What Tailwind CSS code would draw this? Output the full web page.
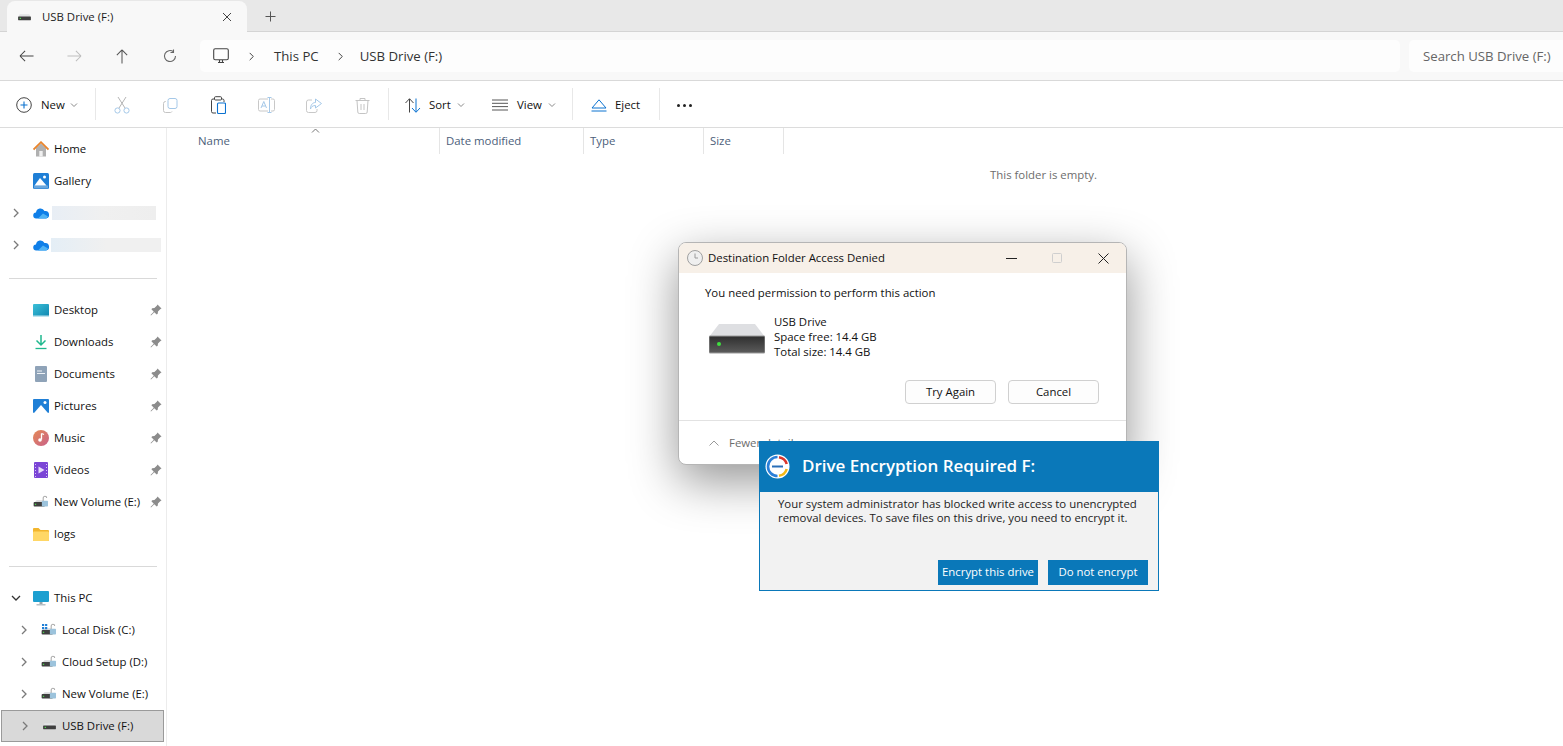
<!DOCTYPE html>
<html lang="en">
<head>
<meta charset="UTF-8">
<title>USB Drive (F:)</title>
<script src="https://cdn.jsdelivr.net/npm/@tailwindcss/browser@4"></script>
</head>
<body class="bg-white font-['Open_Sans','Noto_Sans',sans-serif] text-[11.4px] leading-[16px] text-[#111] overflow-hidden">
<svg class="hidden">
  <symbol id="chev" viewBox="0 0 10 10"><path d="M3 1l4 4-4 4" fill="none" stroke="#7a7a7a" stroke-width="1.300"/></symbol>
  <symbol id="caret" viewBox="0 0 8 8"><path d="M1 2.500l3 3 3-3" fill="none" stroke="#8a8a8a" stroke-width="1"/></symbol>
  <symbol id="pin" viewBox="0 0 12 12"><path d="M7.500 .5l4 4-1.300 .7-2.200 2.400-.3 2.200-1 .8L4.300 8.200 1 11.500 .5 11l3.300-3.300L1.400 5.300l.8-1 2.200-.3L6.800 1.800z" fill="#8c8c8c"/></symbol>
  <symbol id="drive" viewBox="0 0 18 10"><path d="M3 1.500h12l2 3.500H1z" fill="#e2e3e5"/><rect x="1" y="4.500" width="16" height="4.500" rx=".5" fill="#3f3f3f"/><rect x="3" y="6" width="1.600" height="1.500" fill="#4fe04f"/></symbol>
  <symbol id="lockdrive" viewBox="0 0 18 16"><rect x="0.500" y="8" width="13" height="5" rx="1" fill="#3f3f3f"/><path d="M2 8l2-2h8l1.500 2z" fill="#d8d9db"/><rect x="2" y="10" width="1.500" height="1.300" fill="#4fe04f"/><rect x="10" y="6.500" width="7" height="6.500" rx=".8" fill="#9cc3dc"/><path d="M11.500 6.500V3.500a2 2 0 0 1 4 0" fill="none" stroke="#a9a9a9" stroke-width="1.200"/></symbol>
</svg>

<!-- tab strip -->
<div class="h-[32px] bg-[#e8e8e8] border-b border-[#d4d4d4] flex items-end pl-[7px] relative">
  <div class="w-[240px] h-[31px] bg-[#f8f8f8] rounded-t-[8px] flex items-center pl-[10px] pr-[15px] mb-[-1px]">
    <svg class="w-[15px] h-[8px] mr-[10px]" viewBox="0 0 18 10"><use href="#drive"/></svg>
    <span class="flex-1 text-[#1c1c1c]">USB Drive (F:)</span>
    <svg class="w-[10px] h-[10px]" viewBox="0 0 10 10"><path d="M1 1l8 8M9 1l-8 8" stroke="#444" stroke-width="1"/></svg>
  </div>
  <svg class="w-[11px] h-[11px] ml-[18px] mb-[9px]" viewBox="0 0 11 11"><path d="M5.500 .5v10M.5 5.500h10" stroke="#555" stroke-width="1"/></svg>
</div>

<!-- address bar -->
<div class="h-[49px] bg-[#f8f8f8] border-b border-[#d9d9d9] flex items-center pl-[19px]">
  <svg class="w-[15px] h-[14px]" viewBox="0 0 16 14"><path d="M15.500 7H1.500M1 7l5.500-5.500M1 7l5.500 5.500" fill="none" stroke="#444" stroke-width="1.100"/></svg>
  <svg class="w-[15px] h-[14px] ml-[33px]" viewBox="0 0 16 14"><path d="M.5 7h14M15 7L9.500 1.500M15 7l-5.500 5.500" fill="none" stroke="#bdbdbd" stroke-width="1.100"/></svg>
  <svg class="w-[14px] h-[15px] ml-[33px]" viewBox="0 0 14 16"><path d="M7 15.500V1.500M7 1L1.500 6.500M7 1l5.500 5.500" fill="none" stroke="#555" stroke-width="1.100"/></svg>
  <svg class="w-[14px] h-[14px] ml-[34px]" viewBox="0 0 14 14"><path d="M12.500 7A5.500 5.500 0 1 1 10.500 2.800M10.500 .5v3h-3" fill="none" stroke="#666" stroke-width="1.100"/></svg>
  <div class="ml-[23px] w-[1200px] h-[32px] bg-[#fdfdfd] rounded-[5px] flex items-center pl-[13px] text-[13.200px] leading-[18px]">
    <svg class="w-[16px] h-[16px]" viewBox="0 0 16 16"><rect x=".7" y=".7" width="14.600" height="11" rx="1.500" fill="none" stroke="#444" stroke-width="1.100"/><path d="M5 14.500h6M6.500 12v2.500M9.500 12v2.500" stroke="#444" stroke-width="1.100"/></svg>
    <svg class="w-[9px] h-[9px] ml-[18px]" viewBox="0 0 10 10"><path d="M3 1l4 4-4 4" fill="none" stroke="#444" stroke-width="1.100"/></svg>
    <span class="ml-[18px] text-[#333]">This PC</span>
    <svg class="w-[9px] h-[9px] ml-[17px]" viewBox="0 0 10 10"><path d="M3 1l4 4-4 4" fill="none" stroke="#444" stroke-width="1.100"/></svg>
    <span class="ml-[15px] text-[#333]">USB Drive (F:)</span>
  </div>
  <div class="ml-[9px] flex-1 h-[32px] bg-[#fdfdfd] rounded-l-[5px] flex items-center pl-[14px] text-[13.200px] leading-[18px] text-[#666] whitespace-nowrap overflow-hidden">Search USB Drive (F:)</div>
</div>

<!-- command bar -->
<div class="h-[47px] border-b border-[#dcdcdc] flex items-center pl-[16px] pt-[2px]">
  <svg class="w-[16px] h-[16px]" viewBox="0 0 16 16"><circle cx="8" cy="8" r="7.300" fill="none" stroke="#444" stroke-width="1"/><path d="M8 4.500v7M4.500 8h7" stroke="#0b72d0" stroke-width="1.100"/></svg>
  <span class="ml-[9px] w-[24px]">New</span>
  <svg class="w-[8px] h-[8px] ml-[5px]" viewBox="0 0 8 8"><use href="#caret"/></svg>
  <div class="w-px h-[32px] bg-[#e8e8e8] ml-[17px] -mt-[2px]"></div>
  <div class="w-[48px] ml-[2px] flex justify-center">
    <svg class="w-[16px] h-[18px]" viewBox="0 0 16 18"><path d="M4 1l7 11M12 1L5 12" stroke="#b5b5b5" stroke-width="1"/><circle cx="3.500" cy="14.500" r="2.600" fill="none" stroke="#a5c8e8"/><circle cx="12.500" cy="14.500" r="2.600" fill="none" stroke="#a5c8e8"/></svg>
  </div>
  <div class="w-[48px] flex justify-center">
    <svg class="w-[15px] h-[15px]" viewBox="0 0 15 15"><rect x="5" y=".5" width="9" height="10" rx="2" fill="none" stroke="#a5c8e8"/><path d="M3 3.500H2.500A2 2 0 0 0 .5 5.500v7A2 2 0 0 0 2.500 14.500h5a2 2 0 0 0 1.500-1" fill="none" stroke="#c4c4c4"/></svg>
  </div>
  <div class="w-[48px] flex justify-center">
    <svg class="w-[15px] h-[18px]" viewBox="0 0 15 18"><path d="M3.500 3H2a1.500 1.500 0 0 0-1.500 1.500v11A1.500 1.500 0 0 0 2 17h3M10.500 3h1A1.500 1.500 0 0 1 13 4.500V6" fill="none" stroke="#444"/><rect x="3.500" y=".7" width="7" height="3.300" rx="1" fill="none" stroke="#444"/><rect x="6.500" y="7" width="8" height="10.500" rx="1" fill="none" stroke="#0b72d0" stroke-width="1.100"/></svg>
  </div>
  <div class="w-[48px] flex justify-center">
    <svg class="w-[17px] h-[16px]" viewBox="0 0 17 16"><path d="M10 2H2a1.500 1.500 0 0 0-1.500 1.500v9A1.500 1.500 0 0 0 2 14h8M13 2h2a1.500 1.500 0 0 1 1.500 1.500v9A1.500 1.500 0 0 1 15 14h-2" fill="none" stroke="#c8c8c8"/><path d="M11.500 .5v15M9.500 .5h4M9.500 15.500h4" fill="none" stroke="#a5c8e8"/><path d="M3 11l2.800-6.500L8.500 11M4 9h3.500" fill="none" stroke="#a5c8e8"/></svg>
  </div>
  <div class="w-[48px] flex justify-center">
    <svg class="w-[16px] h-[15px]" viewBox="0 0 16 15"><path d="M6 2H2.500A2 2 0 0 0 .5 4v8.500a2 2 0 0 0 2 2H9a2 2 0 0 0 2-2V11" fill="none" stroke="#c8c8c8"/><path d="M9.500 1l6 4.500-6 4.500V7.500c-3 0-4.500 1.500-5 3.500 0-4 2-6.500 5-6.500z" fill="none" stroke="#a5c8e8"/></svg>
  </div>
  <div class="w-[48px] flex justify-center">
    <svg class="w-[15px] h-[17px]" viewBox="0 0 15 17"><path d="M.5 3.500h14M5 3.500V1.500h5v2M2 3.500l.8 11.500a1.500 1.500 0 0 0 1.500 1.500h6.400a1.500 1.500 0 0 0 1.500-1.500l.8-11.500M6 7v6M9 7v6" fill="none" stroke="#c4c4c4"/></svg>
  </div>
  <div class="w-px h-[32px] bg-[#e8e8e8] ml-[2px] -mt-[2px]"></div>
  <svg class="w-[16px] h-[15px] ml-[16px]" viewBox="0 0 16 15"><path d="M4.500 14.500V1M.5 5l4-4.300 4 4.300" fill="none" stroke="#444"/><path d="M11 .5V14M7 10l4 4.300 4-4.300" fill="none" stroke="#0b72d0"/></svg>
  <span class="ml-[8px] w-[24px]">Sort</span>
  <svg class="w-[8px] h-[8px] ml-[4px]" viewBox="0 0 8 8"><use href="#caret"/></svg>
  <svg class="w-[16px] h-[12px] ml-[27px]" viewBox="0 0 16 12"><path d="M0 1h16M0 4.300h16M0 7.600h16M0 11h16" stroke="#444" stroke-width=".9"/></svg>
  <span class="ml-[9px] w-[27px]">View</span>
  <svg class="w-[8px] h-[8px] ml-[4px]" viewBox="0 0 8 8"><use href="#caret"/></svg>
  <div class="w-px h-[32px] bg-[#e8e8e8] ml-[16px] -mt-[2px]"></div>
  <svg class="w-[16px] h-[13px] ml-[18px]" viewBox="0 0 16 13"><path d="M8 .8L15 9H1z" fill="none" stroke="#0b72d0"/><path d="M.5 12h15" stroke="#0b72d0"/></svg>
  <span class="ml-[8px] w-[26px]">Eject</span>
  <div class="w-px h-[32px] bg-[#e8e8e8] ml-[18px] -mt-[2px]"></div>
  <div class="flex gap-[3px] ml-[17px]">
    <span class="w-[3px] h-[3px] rounded-full bg-[#222]"></span><span class="w-[3px] h-[3px] rounded-full bg-[#222]"></span><span class="w-[3px] h-[3px] rounded-full bg-[#222]"></span>
  </div>
</div>

<div class="flex h-[618px]">
  <!-- navigation pane -->
  <nav class="w-[167px] shrink-0 border-r border-[#ececec] pt-[5px] text-[#111]">
    <div class="h-8 flex items-center pl-[33px] gap-[5px]">
      <svg class="w-[16px] h-[16px]" viewBox="0 0 16 16"><path d="M3 7v8.500h10V7L8 2.500z" fill="#b0b0b0"/><rect x="6.300" y="10" width="3.400" height="5.500" fill="#f0f0f0"/><path d="M.5 8.500L8 1.200l7.500 7.300" fill="none" stroke="#e8842c" stroke-width="1.800"/></svg>
      <span>Home</span>
    </div>
    <div class="h-8 flex items-center pl-[33px] gap-[5px]">
      <svg class="w-[16px] h-[16px]" viewBox="0 0 16 16"><rect width="16" height="16" rx="1.500" fill="#1f7fd6"/><rect x="1" y="12.500" width="14" height="3" fill="#6aa6dc"/><path d="M1.500 12.500L7 5l6.500 7.500z" fill="#fff"/><circle cx="11.500" cy="4" r="1.500" fill="#fff"/></svg>
      <span>Gallery</span>
    </div>
    <div class="h-8 flex items-center pl-[11px]">
      <svg class="w-[10px] h-[10px]"><use href="#chev"/></svg>
      <svg class="w-[16px] h-[11px] ml-[12px]" viewBox="0 0 16 11"><path d="M3.500 10.500a3 3 0 0 1-.5-6 4.500 4.500 0 0 1 8.500-1.500A3.500 3.500 0 0 1 13 10.500z" fill="#0f7fe8"/><path d="M5 10.500l5-5 5 3-1.500 2z" fill="#4fb3f5"/></svg>
      <div class="w-[104px] h-[14px] ml-[3px] bg-gradient-to-r from-[#e8eef5] via-[#f0f0f0] to-[#eeeeee]"></div>
    </div>
    <div class="h-8 flex items-center pl-[11px]">
      <svg class="w-[10px] h-[10px]"><use href="#chev"/></svg>
      <svg class="w-[16px] h-[11px] ml-[12px]" viewBox="0 0 16 11"><path d="M3.500 10.500a3 3 0 0 1-.5-6 4.500 4.500 0 0 1 8.500-1.500A3.500 3.500 0 0 1 13 10.500z" fill="#0f7fe8"/><path d="M5 10.500l5-5 5 3-1.500 2z" fill="#4fb3f5"/></svg>
      <div class="w-[110px] h-[14px] ml-[2px] bg-gradient-to-r from-[#e4eef6] via-[#f0f0f0] to-[#f0f0f0]"></div>
    </div>
    <div class="h-px bg-[#d9d9d9] mx-[9px] mt-[17px] mb-[15px]"></div>

    <div class="h-8 flex items-center pl-[33px] pr-[4px] gap-[5px]">
      <svg class="w-[16px] h-[13px]" viewBox="0 0 16 13"><defs><linearGradient id="dsk" x1="0" y1="0" x2="1" y2="1"><stop offset="0" stop-color="#3cc0d8"/><stop offset="1" stop-color="#0f86b0"/></linearGradient></defs><rect width="16" height="13" rx="1" fill="url(#dsk)"/><rect y="11.500" width="16" height="1.500" fill="#bfe3ee"/></svg>
      <span class="flex-1">Desktop</span>
      <svg class="w-[12px] h-[12px]"><use href="#pin"/></svg>
    </div>
    <div class="h-8 flex items-center pl-[33px] pr-[4px] gap-[5px]">
      <svg class="w-[16px] h-[16px]" viewBox="0 0 16 16"><path d="M8 1v10M3.500 6.500L8 11l4.500-4.500" fill="none" stroke="#1fb88e" stroke-width="1.500"/><path d="M2.500 14.500h11" stroke="#1fb88e" stroke-width="1.300"/></svg>
      <span class="flex-1">Downloads</span>
      <svg class="w-[12px] h-[12px]"><use href="#pin"/></svg>
    </div>
    <div class="h-8 flex items-center pl-[33px] pr-[4px] gap-[5px]">
      <svg class="w-[16px] h-[16px]" viewBox="0 0 16 16"><rect x="2" y="0" width="12" height="16" rx="1" fill="#8fa3b8"/><path d="M4 5h5M4 7.500h8" stroke="#eef2f6" stroke-width="1"/></svg>
      <span class="flex-1">Documents</span>
      <svg class="w-[12px] h-[12px]"><use href="#pin"/></svg>
    </div>
    <div class="h-8 flex items-center pl-[33px] pr-[4px] gap-[5px]">
      <svg class="w-[16px] h-[14px]" viewBox="0 0 16 14"><rect width="16" height="14" rx="1" fill="#1f7fd6"/><path d="M1 14L8 6l7 8z" fill="#fff"/><circle cx="12" cy="3.500" r="1.500" fill="#fff"/></svg>
      <span class="flex-1">Pictures</span>
      <svg class="w-[12px] h-[12px]"><use href="#pin"/></svg>
    </div>
    <div class="h-8 flex items-center pl-[33px] pr-[4px] gap-[5px]">
      <svg class="w-[16px] h-[16px]" viewBox="0 0 16 16"><defs><linearGradient id="mus" x1="0" y1="0" x2="1" y2="1"><stop offset="0" stop-color="#e58a55"/><stop offset="1" stop-color="#c9618a"/></linearGradient></defs><circle cx="8" cy="8" r="8" fill="url(#mus)"/><path d="M8.500 3.500v6" stroke="#fff" stroke-width="1.300"/><path d="M8.500 3.500l2.500 1" stroke="#fff" stroke-width="1.300"/><circle cx="7" cy="10" r="1.800" fill="#fff"/></svg>
      <span class="flex-1">Music</span>
      <svg class="w-[12px] h-[12px]"><use href="#pin"/></svg>
    </div>
    <div class="h-8 flex items-center pl-[33px] pr-[4px] gap-[5px]">
      <svg class="w-[16px] h-[16px]" viewBox="0 0 16 16"><rect x="1" width="14" height="16" rx="1" fill="#7b45d6"/><path d="M2 2h1v1H2zM2 5h1v1H2zM2 8h1v1H2zM2 11h1v1H2zM2 14h1v1H2zM13 2h1v1h-1zM13 5h1v1h-1zM13 8h1v1h-1zM13 11h1v1h-1zM13 14h1v1h-1z" fill="#d7c4f5"/><path d="M5.500 4.500l6 3.500-6 3.500z" fill="#e6dbfa"/></svg>
      <span class="flex-1">Videos</span>
      <svg class="w-[12px] h-[12px]"><use href="#pin"/></svg>
    </div>
    <div class="h-8 flex items-center pl-[33px] pr-[4px] gap-[5px]">
      <svg class="w-[16px] h-[14px]" viewBox="0 0 18 16"><use href="#lockdrive"/></svg>
      <span class="flex-1 whitespace-nowrap">New Volume (E:)</span>
      <svg class="w-[12px] h-[12px]"><use href="#pin"/></svg>
    </div>
    <div class="h-8 flex items-center pl-[33px] gap-[5px]">
      <svg class="w-[16px] h-[13px]" viewBox="0 0 16 13"><path d="M0 1a1 1 0 0 1 1-1h4.500l2 2H15a1 1 0 0 1 1 1v9a1 1 0 0 1-1 1H1a1 1 0 0 1-1-1z" fill="#f2b52d"/><rect y="3.500" width="16" height="9.500" rx="1" fill="#ffd766"/></svg>
      <span>logs</span>
    </div>
    <div class="h-px bg-[#d9d9d9] mx-[9px] mt-[16px] mb-[15px]"></div>

    <div class="h-8 flex items-center pl-[11px]">
      <svg class="w-[10px] h-[10px]" viewBox="0 0 10 10"><path d="M1 3l4 4 4-4" fill="none" stroke="#333" stroke-width="1.300"/></svg>
      <svg class="w-[16px] h-[15px] ml-[12px]" viewBox="0 0 16 15"><rect width="16" height="11" rx="1" fill="#1c9fd0"/><rect x="6.500" y="11" width="3" height="2" fill="#9aa5ab"/><rect x="3.500" y="13" width="9" height="1.500" fill="#b8c0c5"/></svg>
      <span class="ml-[5px]">This PC</span>
    </div>
    <div class="h-8 flex items-center pl-[19px]">
      <svg class="w-[10px] h-[10px]"><use href="#chev"/></svg>
      <svg class="w-[16px] h-[14px] ml-[12px]" viewBox="0 0 18 16"><use href="#lockdrive"/><path d="M1 1h2.500v2.500H1zM4.500 1H7v2.500H4.500zM1 4.500h2.500V7H1zM4.500 4.500H7V7H4.500z" fill="#1f7fd6"/></svg>
      <span class="ml-[5px] whitespace-nowrap">Local Disk (C:)</span>
    </div>
    <div class="h-8 flex items-center pl-[19px]">
      <svg class="w-[10px] h-[10px]"><use href="#chev"/></svg>
      <svg class="w-[16px] h-[14px] ml-[12px]" viewBox="0 0 18 16"><use href="#lockdrive"/></svg>
      <span class="ml-[5px] whitespace-nowrap">Cloud Setup (D:)</span>
    </div>
    <div class="h-8 flex items-center pl-[19px]">
      <svg class="w-[10px] h-[10px]"><use href="#chev"/></svg>
      <svg class="w-[16px] h-[14px] ml-[12px]" viewBox="0 0 18 16"><use href="#lockdrive"/></svg>
      <span class="ml-[5px] whitespace-nowrap">New Volume (E:)</span>
    </div>
    <div class="h-8 w-[163px] ml-[1px] flex items-center pl-[18px] bg-[#d9d9d9] border border-[#9a9a9a]">
      <svg class="w-[10px] h-[10px]"><use href="#chev"/></svg>
      <svg class="w-[15px] h-[8px] ml-[12px]" viewBox="0 0 18 10"><use href="#drive"/></svg>
      <span class="ml-[5px] whitespace-nowrap">USB Drive (F:)</span>
    </div>
  </nav>

  <!-- file list -->
  <main class="flex-1 relative">
    <div class="h-[26px] flex text-[#4c607a]">
      <div class="w-[273px] pl-[31px] flex items-center border-r border-[#e5e5e5] relative">Name
        <svg class="absolute left-[144px] top-0 w-[9px] h-[5px]" viewBox="0 0 9 5"><path d="M1 4.500l3.500-3.500 3.500 3.500" fill="none" stroke="#777"/></svg>
      </div>
      <div class="w-[144px] pl-[6px] flex items-center border-r border-[#e5e5e5]">Date modified</div>
      <div class="w-[120px] pl-[6px] flex items-center border-r border-[#e5e5e5]">Type</div>
      <div class="w-[80px] pl-[6px] flex items-center border-r border-[#e5e5e5]">Size</div>
    </div>
    <p class="pl-[823px] pt-[13px] text-[#6d6d6d]">This folder is empty.</p>
  </main>
</div>

<!-- access denied dialog -->
<div class="absolute left-[678px] top-[242px] w-[449px] h-[223px] bg-white rounded-[8px] border border-[#b5b5b5] shadow-[0_16px_48px_rgba(0,0,0,0.42)] overflow-hidden">
  <div class="h-[30px] bg-[#f7f0e8] flex items-center pl-[8px] pr-[17px]">
    <svg class="w-[16px] h-[16px]" viewBox="0 0 16 16"><circle cx="8" cy="8" r="7.500" fill="#efefef" stroke="#a0a0a0"/><path d="M8 3.500V8h3" fill="none" stroke="#9a9a9a"/></svg>
    <span class="ml-[5px] flex-1">Destination Folder Access Denied</span>
    <svg class="w-[11px] h-[1px]" viewBox="0 0 11 1"><rect width="11" height="1" fill="#222"/></svg>
    <svg class="w-[10px] h-[10px] ml-[35px]" viewBox="0 0 10 10"><rect x=".5" y=".5" width="9" height="9" rx="1" fill="none" stroke="#cfcfcf"/></svg>
    <svg class="w-[11px] h-[11px] ml-[36px]" viewBox="0 0 11 11"><path d="M.5 .5l10 10M10.500 .5l-10 10" stroke="#222"/></svg>
  </div>
  <p class="pl-[26px] pt-[12px] leading-[16px]">You need permission to perform this action</p>
  <div class="flex pl-[30px] pt-[13px]">
    <svg class="w-[56px] h-[30px] mt-[10px]" viewBox="0 0 56 30"><defs><linearGradient id="hd" x1="0" y1="0" x2="0" y2="1"><stop offset="0" stop-color="#2e2e2e"/><stop offset="1" stop-color="#5c5c5c"/></linearGradient></defs><path d="M10 0h36l10 13H0z" fill="#dedfe2"/><rect y="12" width="56" height="17" rx="1" fill="url(#hd)" stroke="#9a9a9a"/><circle cx="10" cy="20" r="2" fill="#3fe03f"/></svg>
    <div class="ml-[9px] leading-[15px]">
      <div>USB Drive</div>
      <div>Space free: 14.4 GB</div>
      <div>Total size: 14.4 GB</div>
    </div>
  </div>
  <div class="flex gap-[12px] pl-[226px] pt-[21px]">
    <button class="w-[91px] h-[24px] rounded-[4px] border border-[#d0d0d0] bg-[#fdfdfd]">Try Again</button>
    <button class="w-[91px] h-[24px] rounded-[4px] border border-[#d0d0d0] bg-[#fdfdfd]">Cancel</button>
  </div>
  <div class="mt-[16px] border-t border-[#e2e2e2] flex items-center h-[44px] pl-[30px] text-[#6d6d6d]">
    <svg class="w-[10px] h-[6px]" viewBox="0 0 10 6"><path d="M.5 5.500L5 1l4.500 4.500" fill="none" stroke="#999"/></svg>
    <span class="ml-[10px]">Fewer details</span>
  </div>
</div>

<!-- encryption prompt -->
<div class="absolute left-[759px] top-[441px] w-[400px] h-[150px] bg-[#f2f2f2] border border-[#0a78b9] flex flex-col">
  <div class="h-[51px] -mx-px -mt-px bg-[#0a78b9] flex items-center pl-[6px] text-white">
    <svg class="w-[25px] h-[25px]" viewBox="0 0 25 25"><circle cx="12.500" cy="12.500" r="12" fill="#fff"/><path d="M12.500 3A9.500 9.500 0 0 0 12.500 22" fill="none" stroke="#2a7fd8" stroke-width="2.600"/><path d="M14 3.200A9.500 9.500 0 0 1 21.700 10" fill="none" stroke="#d9352c" stroke-width="2.600"/><path d="M21.700 15A9.500 9.500 0 0 1 14 21.800" fill="none" stroke="#f4b916" stroke-width="2.600"/><path d="M7 12.500h11" fill="none" stroke="#2a6fb8" stroke-width="2"/></svg>
    <span class="ml-[12px] text-[17px] font-semibold leading-none pb-[2px]">Drive Encryption Required F:</span>
  </div>
  <p class="pl-[18px] pt-[5px] pr-[10px] leading-[14px] text-[#222]">Your system administrator has blocked write access to unencrypted removal devices. To save files on this drive, you need to encrypt it.</p>
  <div class="mt-auto mb-[5px] flex justify-end gap-[10px] pr-[10px] text-white">
    <button class="w-[100px] h-[25px] bg-[#0a78b9] pb-[2px]">Encrypt this drive</button>
    <button class="w-[100px] h-[25px] bg-[#0a78b9] pb-[2px]">Do not encrypt</button>
  </div>
</div>
</body>
</html>
